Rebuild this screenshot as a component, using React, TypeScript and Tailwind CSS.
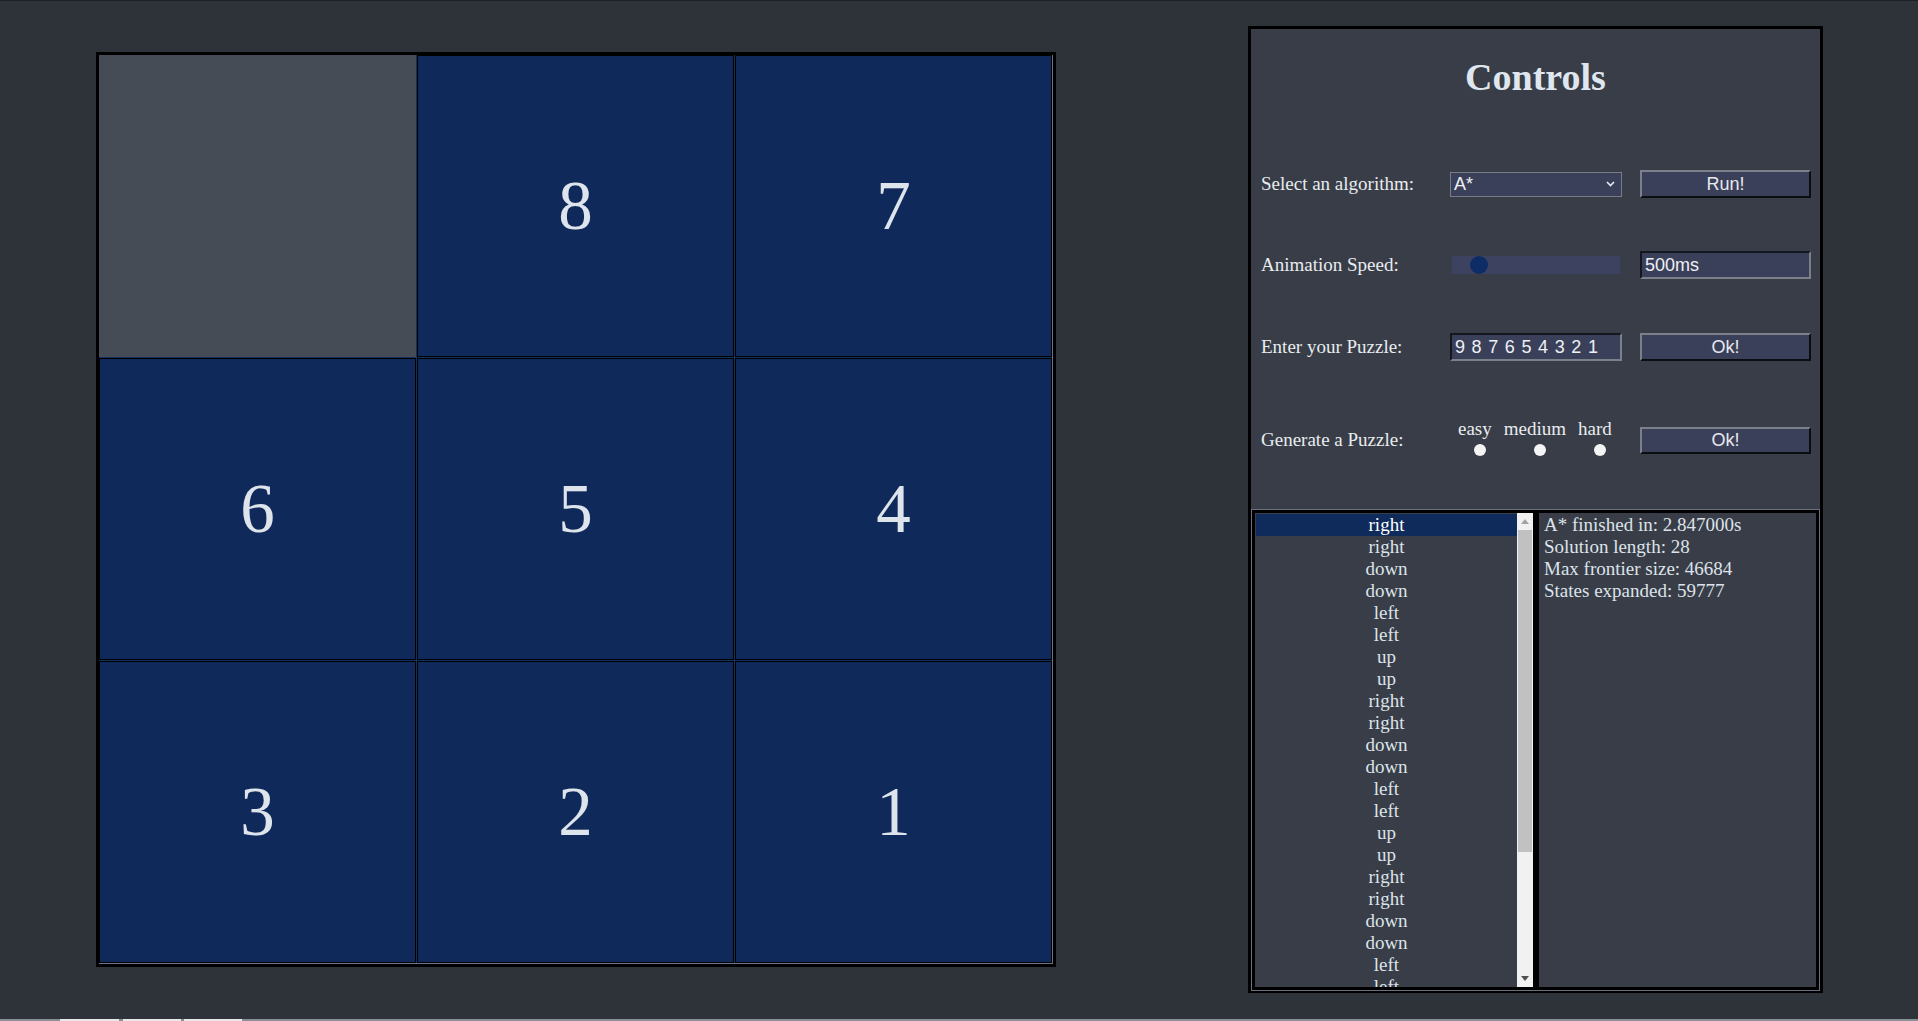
import React from "react";

const serif = { fontFamily: '"Liberation Serif", "Times New Roman", serif' };
const sans = { fontFamily: '"Liberation Sans", Arial, sans-serif' };

const board: (number | null)[] = [null, 8, 7, 6, 5, 4, 3, 2, 1];

const pattern = ["right", "right", "down", "down", "left", "left", "up", "up"];
const moves: string[] = Array.from({ length: 28 }, (_, i) => pattern[i % 8]);

function Tile({ value }: { value: number | null }) {
  if (value === null) {
    return <div className="bg-[#454c55]" />;
  }
  return (
    <div className="flex items-center justify-center border border-black bg-[#0f2a5a]">
      <span className="text-[69px] leading-none text-[#dde4ec]" style={serif}>
        {value}
      </span>
    </div>
  );
}

function Label({ children }: { children: React.ReactNode }) {
  return (
    <div className="flex items-center whitespace-nowrap text-[19px] text-[#e8ecef]" style={serif}>
      {children}
    </div>
  );
}

function Button({ children, h = "h-[28px]" }: { children: React.ReactNode; h?: string }) {
  return (
    <div
      className={`flex ${h} w-[171px] items-center justify-center border-2 border-t-[#7b808b] border-l-[#7b808b] border-r-[#0c0d12] border-b-[#0c0d12] bg-[#3b405a] text-[18px] text-[#e6e9ef]`}
      style={sans}
    >
      {children}
    </div>
  );
}

function InsetInput({ children, w }: { children: React.ReactNode; w: string }) {
  return (
    <div
      className={`flex h-[28px] ${w} items-center border-2 border-t-[#15171f] border-l-[#15171f] border-r-[#7c8089] border-b-[#7c8089] bg-[#3b405a] pl-[3px] text-[18px] text-[#eef0f4]`}
      style={sans}
    >
      {children}
    </div>
  );
}

export default function App() {
  return (
    <div className="flex h-[1021px] w-full flex-col overflow-hidden bg-[#2e333a]">
      <div className="h-[1px] w-full bg-[#1d2026]" />
      <div className="flex flex-1 items-start">
        {/* Board */}
        <div className="ml-[96px] mt-[51px] h-[915px] w-[960px] border-[3px] border-black bg-black pb-[1px] pr-[1px] shadow-[inset_-1px_-1px_0_#6c7385]">
          <div className="grid h-full w-full grid-cols-3 grid-rows-3 gap-[1px] bg-[#14305f]">
            {board.map((v, i) => (
              <Tile key={i} value={v} />
            ))}
          </div>
        </div>

        {/* Controls panel */}
        <div className="ml-[192px] mt-[25px] flex h-[967px] w-[575px] flex-col border-[3px] border-black bg-[#383d47]">
          <div
            className="mt-[26px] h-[44px] text-center text-[38px] font-bold leading-[44px] text-[#dfe6ef]"
            style={serif}
          >
            Controls
          </div>

          {/* Row 1 */}
          <div className="mt-[65px] grid h-[40px] grid-cols-[171px_172px_171px] items-center gap-x-[18px] pl-[10px]">
            <Label>Select an algorithm:</Label>
            <div
              className="flex h-[25px] w-[172px] items-center justify-between border border-[#777c8a] bg-[#3b405a] pl-[3px] pr-[6px] text-[18px] text-[#eef0f4]"
              style={sans}
            >
              <span>A*</span>
              <svg width="9" height="6" viewBox="0 0 9 6">
                <path d="M1 1 L4.5 4.5 L8 1" stroke="#e8eaf0" strokeWidth="1.6" fill="none" />
              </svg>
            </div>
            <Button>Run!</Button>
          </div>

          {/* Row 2 */}
          <div className="mt-[41px] grid h-[40px] grid-cols-[171px_172px_171px] items-center gap-x-[18px] pl-[10px]">
            <Label>Animation Speed:</Label>
            <div className="relative ml-[2px] h-[18px] w-[168px] bg-[#3d4260]">
              <div className="absolute left-[18px] top-0 h-[18px] w-[18px] rounded-full bg-[#0e2d66]" />
            </div>
            <InsetInput w="w-[171px]">500ms</InsetInput>
          </div>

          {/* Row 3 */}
          <div className="mt-[42px] grid h-[40px] grid-cols-[171px_172px_171px] items-center gap-x-[18px] pl-[10px]">
            <Label>Enter your Puzzle:</Label>
            <InsetInput w="w-[172px]">
              <span className="tracking-[0.8px]">9 8 7 6 5 4 3 2 1</span>
            </InsetInput>
            <Button>Ok!</Button>
          </div>

          {/* Row 4 */}
          <div className="mt-[49px] grid h-[48px] grid-cols-[171px_172px_171px] items-center gap-x-[18px] pl-[10px]">
            <Label>Generate a Puzzle:</Label>
            <div className="flex h-full items-start gap-x-[12px] pl-[8px] pt-[2px]">
              {["easy", "medium", "hard"].map((d) => (
                <div key={d} className="flex flex-col items-center">
                  <span className="h-[22px] text-[19px] leading-[22px] text-[#e8ecef]" style={serif}>
                    {d}
                  </span>
                  <span className="ml-[10px] mt-[4px] h-[12px] w-[12px] rounded-full bg-[#f4f4f4]" />
                </div>
              ))}
            </div>
            <Button h="h-[27px]">Ok!</Button>
          </div>

          {/* Results box */}
          <div className="mx-[1px] mt-[46px] flex h-[480px] border-[3px] border-black bg-black shadow-[0_0_0_1px_#6b7080]">
            <div className="flex h-full w-[278px] bg-[#383d47]">
              <div className="h-full flex-1 overflow-hidden pl-[1px] pt-[1px]" style={serif}>
                {moves.map((m, i) => (
                  <div
                    key={i}
                    className={`h-[22px] text-center text-[19px] leading-[22px] ${
                      i === 0 ? "bg-[#0f2b5b] text-white" : "text-[#dde3ea]"
                    }`}
                  >
                    {m}
                  </div>
                ))}
              </div>
              <div className="flex h-full w-[16px] flex-col bg-[#f1f1f1]">
                <div className="flex h-[17px] items-center justify-center">
                  <svg width="8" height="5" viewBox="0 0 8 5">
                    <path d="M0 5 L4 0 L8 5 Z" fill="#a3a3a3" />
                  </svg>
                </div>
                <div className="mx-[1px] h-[322px] bg-[#c1c1c1]" />
                <div className="flex-1" />
                <div className="flex h-[17px] items-center justify-center">
                  <svg width="8" height="5" viewBox="0 0 8 5">
                    <path d="M0 0 L8 0 L4 5 Z" fill="#505050" />
                  </svg>
                </div>
              </div>
            </div>
            <div
              className="ml-[6px] h-full flex-1 bg-[#383d47] pl-[5px] pt-[1px] text-[19px] leading-[22px] text-[#dde3ea]"
              style={serif}
            >
              <div>A* finished in: 2.847000s</div>
              <div>Solution length: 28</div>
              <div>Max frontier size: 46684</div>
              <div>States expanded: 59777</div>
            </div>
          </div>
        </div>
      </div>
      <div className="flex h-[2px] w-full bg-[#8a8f96]">
        <div className="ml-[60px] h-full w-[59px] bg-[#e8e8e8]" />
        <div className="ml-[4px] h-full w-[58px] bg-[#e8e8e8]" />
        <div className="ml-[3px] h-full w-[58px] bg-[#e8e8e8]" />
      </div>
    </div>
  );
}
